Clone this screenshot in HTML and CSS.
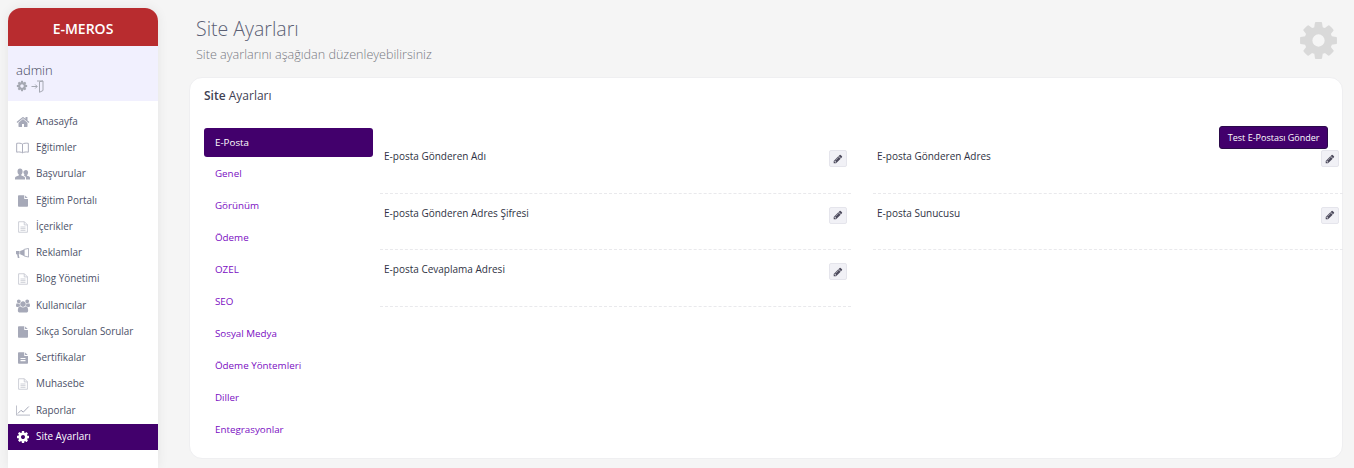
FILE: index.html
```html
<!DOCTYPE html>
<html lang="tr">
<head>
<meta charset="utf-8">
<title>Site Ayarları</title>
<link rel="stylesheet" href="styles.css">
</head>
<body>
<svg class="defs" width="0" height="0" aria-hidden="true">
  <defs>
    <symbol id="i-cog" viewBox="0 0 1792 1792"><path d="M1152 896q0-106-75-181t-181-75-181 75-75 181 75 181 181 75 181-75 75-181zm512-109v222q0 12-8 23t-20 13l-185 28q-19 54-39 91 35 50 107 138 10 12 10 25t-9 23q-27 37-99 108t-94 71q-12 0-26-9l-138-108q-44 23-91 38-16 136-29 186-7 28-36 28h-222q-14 0-24.500-8.500t-11.500-21.500l-28-184q-49-16-90-37l-141 107q-10 9-25 9-14 0-25-11-126-114-165-168-7-10-7-23 0-12 8-23 15-21 51-66.500t54-70.500q-27-50-41-99l-183-27q-13-2-21-12.500t-8-23.500v-222q0-12 8-23t19-13l186-28q14-46 39-92-40-57-107-138-10-12-10-24 0-10 9-23 26-36 98.500-107.500t94.500-71.500q13 0 26 10l138 107q44-23 91-38 16-136 29-186 7-28 36-28h222q14 0 24.500 8.500t11.500 21.500l28 184q49 16 90 37l142-107q9-9 24-9 13 0 25 10 129 119 165 170 7 8 7 22 0 12-8 23-15 21-51 66.500t-54 70.500q26 50 41 98l183 28q13 2 21 12.500t8 23.500z"/></symbol>
    <symbol id="i-pencil" viewBox="0 0 1792 1792"><path d="M491 1536l91-91-235-235-91 91v107h128v128h107zm523-928q0-22-22-22-10 0-17 7l-542 542q-7 7-7 17 0 22 22 22 10 0 17-7l542-542q7-7 7-17zm-54-192l416 416-832 832h-416v-416zm683 96q0 53-37 90l-166 166-416-416 166-165q36-38 90-38 53 0 91 38l235 234q37 39 37 91z"/></symbol>
    <symbol id="i-home" viewBox="0 0 1792 1792"><path d="M1472 992v480q0 26-19 45t-45 19h-384v-384h-256v384h-384q-26 0-45-19t-19-45v-480q0-1 .5-3t.5-3l575-474 575 474q1 2 1 6zm223-69l-62 74q-8 9-21 11h-3q-13 0-21-7l-692-577-692 577q-12 8-24 7-13-2-21-11l-62-74q-8-10-7-23.500t11-21.500l719-599q32-26 76-26t76 26l244 204v-195q0-14 9-23t23-9h192q14 0 23 9t9 23v408l219 182q10 8 11 21.500t-7 23.500z"/></symbol>
    <symbol id="i-book" viewBox="0 0 14 12"><path class="line" d="M7 1.800C5.700.8 3 .6.700 1v9.500C3 10 5.700 10.300 7 11.200c1.300-.9 4-1.200 6.300-.7V1C11 .6 8.300.8 7 1.800zM7 1.800v9.400"/></symbol>
    <symbol id="i-people" viewBox="0 0 15 12"><path d="M5 .5c1.600 0 2.600 1.300 2.600 2.900 0 1.400-.7 2.600-1.300 3.100v1c2 .5 3.700 1.200 3.700 2.400v1.600H0v-1.600c0-1.200 1.900-1.900 3.800-2.400v-1C3.100 6 2.500 4.800 2.500 3.400 2.500 1.800 3.400.5 5 .5z"/><path d="M11 2c1.300 0 2.100 1.100 2.100 2.400 0 1.200-.6 2.200-1.100 2.500v.9c1.600.4 3 1 3 2v1.700h-4v-1.600c0-1.100-.8-1.900-2.300-2.500.3-.1.500-.2.700-.4v-.5c-.5-.4-1-1.300-1-2.500C8.400 3.100 9.700 2 11 2z"/></symbol>
    <symbol id="i-file" viewBox="0 0 12 14"><path d="M7.500 0v4.500H12V13a1 1 0 0 1-1 1H1a1 1 0 0 1-1-1V1a1 1 0 0 1 1-1h6.500zM8.500.3l3.200 3.200H8.500z"/></symbol>
    <symbol id="i-file-text" viewBox="0 0 12 14"><path class="line" d="M.7.7h7l3.600 3.600v9H.7zM7.500.7v3.800h3.800M3 7h6M3 9h6M3 11h6"/></symbol>
    <symbol id="i-file-solid" viewBox="0 0 12 14"><path fill-rule="evenodd" d="M1 0h6.500v4.500H12V13a1 1 0 0 1-1 1H1a1 1 0 0 1-1-1V1a1 1 0 0 1 1-1zM8.500.3l3.200 3.200H8.500zM3 7v1.300h6V7zM3 9.500v1.300h6V9.500z"/></symbol>
    <symbol id="i-bullhorn" viewBox="0 0 12 10"><path d="M0 2.800h3.300v3H2.500l.7 3.400H1.700L1 5.800H0zM3.800 2.800 7.500 1.300v6L3.800 5.800z"/><path class="line thin" d="M7.500 1.200 11.600.3v8l-4.100-1z"/></symbol>
    <symbol id="i-users" viewBox="0 0 1920 1792"><path d="M593 896q-162 5-265 128h-134q-82 0-138-40.500t-56-118.500q0-353 124-353 6 0 43.500 21t97.500 42.500 119 21.500q67 0 133-23-5 37-5 66 0 139 81 256zm1071 637q0 120-73 189.500t-194 69.500h-874q-121 0-194-69.500t-73-189.500q0-53 3.500-103.500t14-109 26.500-108.500 43-97.500 62-81 85.500-53.500 111.500-20q10 0 43 21.500t73 48 107 48 135 21.500 135-21.500 107-48 73-48 43-21.500q61 0 111.500 20t85.500 53.500 62 81 43 97.500 26.500 108.500 14 109 3.500 103.500zm-1024-1277q0 106-75 181t-181 75-181-75-75-181 75-181 181-75 181 75 75 181zm704 384q0 159-112.500 271.500t-271.500 112.500-271.500-112.500-112.500-271.500 112.500-271.500 271.500-112.500 271.500 112.500 112.500 271.500zm576 225q0 78-56 118.500t-138 40.500h-134q-103-123-265-128 81-117 81-256 0-29-5-66 66 23 133 23 59 0 119-21.500t97.500-42.500 43.500-21q124 0 124 353zm-128-609q0 106-75 181t-181 75-181-75-75-181 75-181 181-75 181 75 75 181z"/></symbol>
    <symbol id="i-chart" viewBox="0 0 14 10"><path class="line thin" d="M.4 0v9.600H14"/><path class="line" d="M1.800 8 5 4.800l2.300 1.800L12.800 1"/></symbol>
    <symbol id="i-signin" viewBox="0 0 13 13"><path class="line" d="M6 1h6v9.500l-3.500 1.800V1.700L12 1M.5 6.500H6M4.200 4.500l2 2-2 2"/></symbol>
  </defs>
</svg>

<div class="layout">
  <aside class="sidebar">
    <div class="brand">E-MEROS</div>
    <div class="user">
      <div class="user-name">admin</div>
      <div class="user-tools">
        <svg class="tool"><use href="#i-cog"/></svg>
        <svg class="tool-out"><use href="#i-signin"/></svg>
      </div>
    </div>
    <nav class="menu">
      <a class="menu-item"><span class="menu-icon"><svg class="ic-14"><use href="#i-home"/></svg></span>Anasayfa</a>
      <a class="menu-item"><span class="menu-icon"><svg class="ic-book"><use href="#i-book"/></svg></span>Eğitimler</a>
      <a class="menu-item"><span class="menu-icon"><svg class="ic-people"><use href="#i-people"/></svg></span>Başvurular</a>
      <a class="menu-item"><span class="menu-icon"><svg class="ic-file"><use href="#i-file"/></svg></span>Eğitim Portalı</a>
      <a class="menu-item"><span class="menu-icon"><svg class="ic-file light"><use href="#i-file-text"/></svg></span>İçerikler</a>
      <a class="menu-item"><span class="menu-icon"><svg class="ic-horn"><use href="#i-bullhorn"/></svg></span>Reklamlar</a>
      <a class="menu-item"><span class="menu-icon"><svg class="ic-file light"><use href="#i-file-text"/></svg></span>Blog Yönetimi</a>
      <a class="menu-item"><span class="menu-icon"><svg class="ic-14"><use href="#i-users"/></svg></span>Kullanıcılar</a>
      <a class="menu-item"><span class="menu-icon"><svg class="ic-file"><use href="#i-file"/></svg></span>Sıkça Sorulan Sorular</a>
      <a class="menu-item"><span class="menu-icon"><svg class="ic-file"><use href="#i-file-solid"/></svg></span>Sertifikalar</a>
      <a class="menu-item"><span class="menu-icon"><svg class="ic-file light"><use href="#i-file-text"/></svg></span>Muhasebe</a>
      <a class="menu-item"><span class="menu-icon"><svg class="ic-chart"><use href="#i-chart"/></svg></span>Raporlar</a>
      <a class="menu-item is-active"><span class="menu-icon"><svg class="ic-14"><use href="#i-cog"/></svg></span>Site Ayarları</a>
    </nav>
  </aside>

  <main class="main">
    <header class="page-head">
      <div>
        <h1 class="page-title">Site Ayarları</h1>
        <p class="page-sub">Site ayarlarını aşağıdan düzenleyebilirsiniz</p>
      </div>
      <svg class="page-icon"><use href="#i-cog"/></svg>
    </header>

    <section class="card">
      <h2 class="card-title"><b>Site</b> Ayarları</h2>
      <div class="card-body">
        <ul class="tabs">
          <li class="tab is-active">E-Posta</li>
          <li class="tab">Genel</li>
          <li class="tab">Görünüm</li>
          <li class="tab">Ödeme</li>
          <li class="tab">OZEL</li>
          <li class="tab">SEO</li>
          <li class="tab">Sosyal Medya</li>
          <li class="tab">Ödeme Yöntemleri</li>
          <li class="tab">Diller</li>
          <li class="tab">Entegrasyonlar</li>
        </ul>
        <div class="panel">
          <div class="panel-actions"><button class="btn-test" type="button">Test E-Postası Gönder</button></div>
          <div class="fields">
            <div class="field"><span class="field-label">E-posta Gönderen Adı</span><button class="btn-edit" type="button"><svg><use href="#i-pencil"/></svg></button></div>
            <div class="field"><span class="field-label">E-posta Gönderen Adres</span><button class="btn-edit" type="button"><svg><use href="#i-pencil"/></svg></button></div>
            <div class="field"><span class="field-label">E-posta Gönderen Adres Şifresi</span><button class="btn-edit" type="button"><svg><use href="#i-pencil"/></svg></button></div>
            <div class="field"><span class="field-label">E-posta Sunucusu</span><button class="btn-edit" type="button"><svg><use href="#i-pencil"/></svg></button></div>
            <div class="field"><span class="field-label">E-posta Cevaplama Adresi</span><button class="btn-edit" type="button"><svg><use href="#i-pencil"/></svg></button></div>
          </div>
        </div>
      </div>
    </section>
  </main>
</div>
</body>
</html>
```
FILE: styles.css
```css
* { box-sizing: border-box; }

html, body { height: 100%; }

body {
  margin: 0;
  overflow: hidden;
  background: #f5f5f5;
  color: #3f4254;
  font-family: "Open Sans", "Liberation Sans", sans-serif;
  font-size: 10px;
}

.defs { position: absolute; }

.line { fill: none; stroke: currentColor; stroke-width: 1; }
.line.thin { stroke-width: .8; }

.layout {
  display: flex;
  height: 468px;
  padding-left: 8px;
}

/* Sidebar */
.sidebar {
  flex: 0 0 150px;
  margin-top: 8px;
  background: #fff;
  border-radius: 13px 13px 0 0;
  box-shadow: 0 0 12px rgba(0, 0, 0, .07);
}

.brand {
  height: 38px;
  background: #b82c2f;
  border-radius: 13px 13px 0 0;
  color: #fff;
  font-size: 14px;
  font-weight: 600;
  line-height: 42px;
  text-align: center;
}

.user {
  height: 55px;
  padding: 15px 8px 0;
  background: #f1f0fe;
}

.user-name {
  color: #44475a;
  font-size: 13px;
  font-weight: 300;
  line-height: 18px;
}

.user-tools {
  display: flex;
  align-items: center;
  gap: 3px;
  height: 14px;
  color: #a5a8b2;
  fill: currentColor;
}

.tool { width: 12px; height: 12px; }
.tool-out { width: 13px; height: 13px; }

.menu { padding-top: 8px; }

.menu-item {
  display: flex;
  align-items: center;
  height: 26.25px;
  padding-bottom: .5px;
  color: #4c5168;
  font-size: 9.9px;
  line-height: 1;
}

.menu-icon {
  display: flex;
  flex: 0 0 28px;
  align-items: center;
  justify-content: center;
  padding-left: 1px;
  color: #a6a9b8;
  fill: currentColor;
}

.menu-item.is-active { background: #42006c; color: #fff; }
.menu-item.is-active .menu-icon { color: #fff; }

.ic-14 { width: 14px; height: 14px; }
.ic-book { width: 13px; height: 12px; }
.ic-horn { width: 13px; height: 11px; }
.ic-people { width: 15px; height: 12px; }
.ic-file { width: 10px; height: 12px; }
.ic-chart { width: 14px; height: 11px; }
.light { color: #c4c6d0; }

/* Main */
.main {
  flex: 1;
  min-width: 0;
  padding: 0 11px 9px 31px;
  display: flex;
  flex-direction: column;
}

.page-head {
  display: flex;
  justify-content: space-between;
  align-items: flex-start;
  flex: 0 0 77px;
  padding: 15px 3px 0 7px;
}

.page-title {
  margin: 0;
  color: #5b6074;
  font-size: 19.5px;
  font-weight: 300;
  line-height: 27px;
}

.page-sub {
  margin: 4px 0 0;
  color: #777982;
  font-size: 12.6px;
  font-weight: 300;
  line-height: 18px;
}

.page-icon {
  width: 43px;
  height: 43px;
  margin-top: 4px;
  fill: #d9d9d9;
}

.card {
  flex: 1;
  min-height: 0;
  background: #fff;
  border: 1px solid #efeff1;
  border-radius: 13px;
}

.card-title {
  margin: 0;
  padding: 10px 14px 0;
  color: #3f4254;
  font-size: 12px;
  font-weight: 400;
  line-height: 16px;
}

.card-title b { font-weight: 600; }

.card-body {
  display: flex;
  padding: 24px 0 0 14px;
}

/* Tabs */
.tabs {
  flex: 0 0 169px;
  margin: 0;
  padding: 0;
  list-style: none;
}

.tab {
  height: 32px;
  padding-left: 11px;
  color: #7a0cc2;
  font-size: 9.8px;
  line-height: 31px;
}

.tab.is-active {
  height: 29px;
  margin-bottom: 1px;
  background: #42006c;
  border-radius: 3px;
  color: #fff;
  line-height: 29px;
}

/* Panel */
.panel {
  flex: 1;
  min-width: 0;
  padding-left: 7px;
}

.panel-actions {
  display: flex;
  justify-content: flex-end;
  height: 23px;
  margin: -2px 0 -12px;
  padding-right: 14px;
  position: relative;
  z-index: 1;
}

.btn-test {
  height: 23px;
  padding: 0 7.5px;
  background: #42006c;
  border: 1px solid #2b0a4a;
  border-radius: 3px;
  color: #fff;
  font: 400 9px "Open Sans", "Liberation Sans", sans-serif;
}

.fields {
  display: grid;
  grid-template-columns: 471px 470px;
  column-gap: 22px;
  grid-auto-rows: 56.5px;
}

.field {
  display: flex;
  justify-content: space-between;
  align-items: flex-start;
  padding: 13px 4px 0;
  border-bottom: 1px dashed #e9e9ec;
}

.field-label {
  color: #2f3244;
  font-size: 10px;
  font-weight: 500;
  line-height: 12px;
}

.btn-edit {
  display: flex;
  align-items: center;
  justify-content: center;
  width: 18px;
  height: 17px;
  margin-top: 0;
  padding: 0;
  background: #f1f1f6;
  border: 1px solid #e5e5ec;
  border-radius: 2px;
  color: #4c4a5c;
  fill: currentColor;
}

.btn-edit svg { width: 10px; height: 10px; }
```
